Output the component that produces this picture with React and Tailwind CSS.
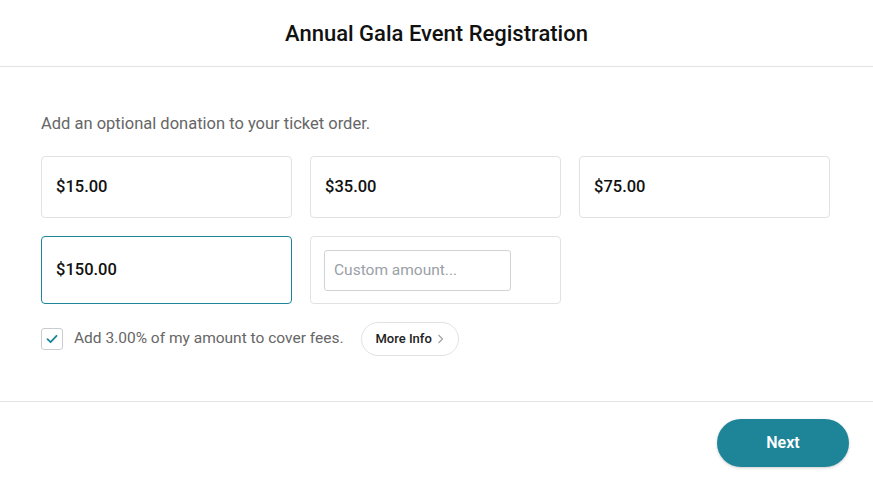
import { useState } from "react";

const montos = ["$15.00", "$35.00", "$75.00", "$150.00"];

export default function App() {
  const [elegido, setElegido] = useState("$150.00");
  const [custom, setCustom] = useState("");
  const [cubrir, setCubrir] = useState(true);

  return (
    <div
      className="min-h-screen w-full bg-white flex flex-col"
      style={{ fontFamily: "Roboto, 'Liberation Sans', sans-serif" }}
    >
      <div className="h-[67px] flex items-center justify-center border-b border-[#e3e3e3]">
        <h1 className="text-[22px] font-medium text-[#111]">Annual Gala Event Registration</h1>
      </div>

      <div className="pl-[41px] pr-[43px] pt-[45px] pb-[45px] border-b border-[#e3e3e3]">
        <p className="text-[16.5px] leading-6 text-[#666]">Add an optional donation to your ticket order.</p>

        <div className="mt-5 grid grid-cols-3 gap-[18px]">
          {montos.map((m) => (
            <button
              key={m}
              onClick={() => setElegido(m)}
              className={
                "h-[62px] text-left px-[14px] rounded-[4px] border bg-white text-[16.5px] font-medium text-[#111] " +
                (elegido === m ? "border-[#1e8599] h-[68px]" : "border-[#e2e2e2]")
              }
            >
              {m}
            </button>
          ))}
          <div className="h-[68px] rounded-[4px] border border-[#e2e2e2] px-[13px] flex items-center">
            <input
              className="w-[187px] h-[41px] rounded-[3px] border border-[#cfd3d6] px-[9px] text-[15.5px] text-[#333] placeholder-[#9aa0a6] outline-none"
              placeholder="Custom amount..."
              value={custom}
              onChange={(e) => setCustom(e.target.value)}
            />
          </div>
        </div>

        <div className="mt-[18px] flex items-center">
          <button
            onClick={() => setCubrir(!cubrir)}
            className="w-[22px] h-[22px] rounded-[3px] border border-[#c9cdd1] flex items-center justify-center bg-white"
          >
            {cubrir && (
              <svg width="14" height="14" viewBox="0 0 14 14" fill="none">
                <path d="M2.5 7.2 L5.6 10.2 L11.5 3.8" stroke="#1e8599" strokeWidth="1.8" strokeLinecap="round" strokeLinejoin="round" />
              </svg>
            )}
          </button>
          <span className="ml-[11px] text-[15.5px] text-[#666]">Add 3.00% of my amount to cover fees.</span>
          <button className="ml-[17px] h-[34px] px-[14px] rounded-full border border-[#e2e2e2] flex items-center gap-[5px] text-[13px] font-medium text-[#222]">
            More Info
            <svg width="7" height="10" viewBox="0 0 7 10" fill="none">
              <path d="M1.5 1 L5.5 5 L1.5 9" stroke="#a0a0a0" strokeWidth="1.2" />
            </svg>
          </button>
        </div>
      </div>

      <div className="flex justify-end pt-[17px] pr-[24px]">
        <button className="w-[132px] h-[48px] rounded-full bg-[#1e8599] text-white text-[16px] font-semibold shadow-[0_1px_3px_rgba(0,0,0,0.2)]">
          Next
        </button>
      </div>
    </div>
  );
}
